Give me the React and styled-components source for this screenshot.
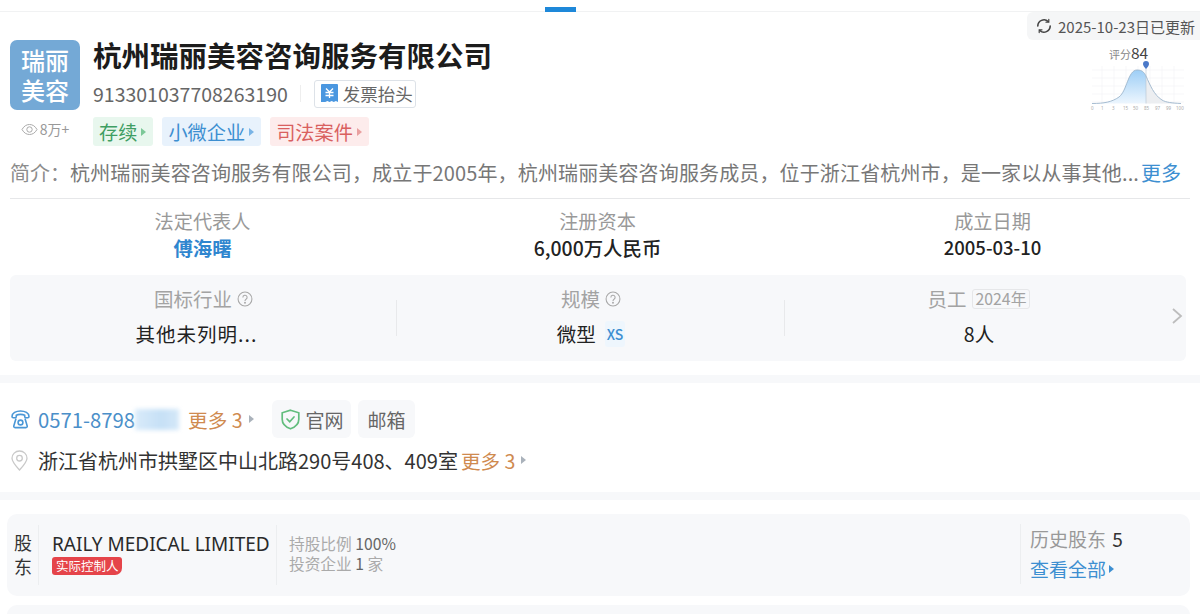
import React from "react";
import styled, { createGlobalStyle } from "styled-components";

const FONT = `"Noto Sans CJK SC", "Noto Sans", sans-serif`;

const INTRO_TEXT =
  "杭州瑞丽美容咨询服务有限公司\uFF0C成立于2005年\uFF0C杭州瑞丽美容咨询服务成员\uFF0C位于浙江省杭州市\uFF0C是一家以从事其他...";

const GlobalStyle = createGlobalStyle`
  html, body {
    margin: 0;
    padding: 0;
    background: #fff;
    font-family: ${FONT};
    color: #222;
  }
  * { box-sizing: border-box; }
`;

const Page = styled.div`
  position: relative;
  width: 1200px;
  height: 614px;
  overflow: hidden;
  background: #fff;
`;

const TabBar = styled.div`
  height: 12px;
  border-bottom: 1px solid #f1f2f3;
  display: flex;
  justify-content: center;
  align-items: flex-end;
`;
const TabMark = styled.div`
  width: 31px;
  height: 5px;
  margin-bottom: -1px;
  margin-right: 79px;
  background: #1e88d9;
`;

const UpdateBadge = styled.div`
  position: absolute;
  top: 12px;
  right: 0;
  width: 173px;
  height: 28px;
  padding-left: 9px;
  display: flex;
  align-items: center;
  gap: 6px;
  background: #f5f6f7;
  border-radius: 6px 0 0 6px;
  font-size: 15px;
  color: #555;
  white-space: nowrap;
`;

const ScoreBox = styled.div`
  position: absolute;
  top: 44px;
  right: 12px;
  width: 98px;
  height: 68px;
`;
const ScoreLabel = styled.div`
  position: absolute;
  top: 0;
  left: 19px;
  display: flex;
  align-items: baseline;
  font-size: 11px;
  color: #888;
  line-height: 16px;
  white-space: nowrap;
  b {
    font-weight: 400;
    font-size: 15.5px;
    color: #444;
  }
`;

const Header = styled.section`
  display: flex;
  gap: 13px;
  padding: 28px 0 0 10px;
`;
const LogoColumn = styled.div`
  width: 70px;
  display: flex;
  flex-direction: column;
  align-items: center;
`;
const Logo = styled.div`
  width: 70px;
  height: 70px;
  background: #74a9d6;
  border-radius: 7px;
  color: #fff;
  display: flex;
  align-items: center;
  justify-content: center;
  text-align: center;
  font-size: 24px;
  font-weight: 500;
  line-height: 30px;
`;
const Views = styled.div`
  margin-top: 10px;
  display: flex;
  align-items: center;
  gap: 2px;
  font-size: 14px;
  line-height: 18px;
  color: #999;
`;
const HeadInfo = styled.div`
  display: flex;
  flex-direction: column;
`;
const Title = styled.h1`
  margin: -1px 0 0;
  font-size: 28.5px;
  line-height: 32px;
  font-weight: 700;
  color: #1c1c1c;
  white-space: nowrap;
`;
const CodeRow = styled.div`
  display: flex;
  align-items: center;
  margin-top: 8px;
  height: 29px;
`;
const Code = styled.span`
  font-size: 19.5px;
  color: #666;
`;
const VBar = styled.span`
  width: 1px;
  height: 17px;
  margin: 0 13px 0 12px;
  background: #eee;
`;
const InvoiceBtn = styled.span`
  height: 28px;
  width: 102px;
  display: flex;
  align-items: center;
  gap: 5px;
  padding-left: 6px;
  border: 1px solid #dde2e8;
  border-radius: 3px;
  font-size: 17.5px;
  color: #666;
  white-space: nowrap;
`;
const TagRow = styled.div`
  display: flex;
  gap: 9px;
  margin-top: 9px;
`;
const Tag = styled.span`
  height: 29px;
  padding: 0 7px 0 6px;
  display: flex;
  align-items: center;
  gap: 4px;
  border-radius: 3px;
  font-size: 19.2px;
  background: ${(p) => p.$bg};
  color: ${(p) => p.$fg};
  white-space: nowrap;
`;
const Caret = styled.span`
  width: 0;
  height: 0;
  border-style: solid;
  border-width: 4px 0 4px 5px;
  border-color: transparent transparent transparent ${(p) => p.$c};
`;

const Intro = styled.div`
  margin: 13px 10px 0 10px;
  height: 40px;
  display: flex;
  align-items: center;
  font-size: 20px;
  color: #777;
  white-space: nowrap;
  border-bottom: 1px solid #e6e7e9;
  padding-bottom: 13px;
`;
const IntroLabel = styled.span`
  width: 60px;
  color: #8c8c8c;
`;
const IntroText = styled.span`
  letter-spacing: 0.14px;
`;
const IntroMore = styled.a`
  margin-left: 2px;
  color: #3d8fd1;
`;

const BasicRow = styled.div`
  display: grid;
  grid-template-columns: 395px 395px 395px;
  margin: 9px 0 0 5px;
  text-align: center;
`;
const Cell = styled.div`
  display: flex;
  flex-direction: column;
  align-items: center;
`;
const CellLabel = styled.div`
  font-size: 19.2px;
  line-height: 26px;
  color: #999;
`;
const CellValue = styled.div`
  font-size: ${(p) => p.$size || 19.4}px;
  line-height: 27px;
  color: ${(p) => (p.$link ? "#2f86cf" : "#222")};
  font-weight: ${(p) => (p.$link ? 700 : 500)};
`;

const StatsPanel = styled.div`
  margin: 14px 14px 0 10px;
  height: 86px;
  padding-top: 11px;
  border-radius: 6px;
  background: #f7f8fa;
  display: grid;
  grid-template-columns: 387px 388px 388px 13px;
`;
const Stat = styled.div`
  position: relative;
  display: flex;
  flex-direction: column;
  align-items: center;
  height: 60px;
  &::after {
    content: "";
    display: ${(p) => (p.$last ? "none" : "block")};
    position: absolute;
    right: 0;
    top: 14px;
    width: 1px;
    height: 36px;
    background: #e8e9eb;
  }
`;
const StatLabel = styled.div`
  display: flex;
  align-items: center;
  gap: 5px;
  font-size: 19.5px;
  line-height: 26px;
  color: #a3a3a3;
`;
const StatValue = styled.div`
  display: flex;
  align-items: center;
  margin-top: 9px;
  padding-right: ${(p) => p.$pr || 0}px;
  font-size: 19.5px;
  line-height: 26px;
  letter-spacing: ${(p) => p.$ls || 0}px;
  color: #222;
`;
const YearChip = styled.span`
  padding: 0 3px;
  border: 1px solid #e6e7e9;
  border-radius: 3px;
  font-size: 15.8px;
  line-height: 18px;
  color: #a3a3a3;
`;
const XsChip = styled.span`
  margin-left: 9px;
  padding: 0 2px;
  height: 26px;
  display: inline-flex;
  align-items: center;
  background: #eef6fd;
  border-radius: 3px;
  font-size: 14px;
  font-weight: 500;
  color: #3d8fd1;
`;
const PanelArrow = styled.div`
  display: flex;
  align-items: center;
  height: 60px;
  margin-left: -2px;
`;

const Band = styled.div`
  height: 8px;
  background: #f7f8fa;
  margin-top: ${(p) => p.$mt}px;
`;

const ContactRow = styled.div`
  display: flex;
  align-items: center;
  height: 38px;
  margin: 17px 0 0 11px;
`;
const PhoneText = styled.span`
  margin-left: 8px;
  font-size: 20.3px;
  color: #4b8fc9;
`;
const Blurred = styled.span`
  width: 44px;
  height: 21px;
  background: linear-gradient(90deg, #d9ebfa, #c6e0f6 60%, #d5e8f8);
  filter: blur(2px);
`;
const More = styled.span`
  display: flex;
  align-items: center;
  gap: 6px;
  margin-left: ${(p) => p.$ml}px;
  font-size: 19.6px;
  color: #cf8a4f;
  white-space: nowrap;
`;
const Chip = styled.span`
  height: 38px;
  display: flex;
  align-items: center;
  gap: 6px;
  padding: 0 ${(p) => p.$pr}px 0 ${(p) => p.$pl}px;
  margin-left: ${(p) => p.$ml}px;
  background: #f7f8fa;
  border-radius: 6px;
  font-size: 19px;
  color: #666;
`;
const AddressRow = styled.div`
  display: flex;
  align-items: center;
  height: 30px;
  margin: 7px 0 0 11px;
`;
const AddressText = styled.span`
  margin-left: 10px;
  font-size: 20px;
  color: #333;
  white-space: nowrap;
`;

const HolderCard = styled.div`
  display: flex;
  align-items: center;
  height: 82px;
  margin: 14px 10px 0 7px;
  background: #f7f8fa;
  border-radius: 10px;
`;
const HolderTag = styled.div`
  width: 32px;
  height: 60px;
  padding: 0 0 3px 7px;
  display: flex;
  align-items: center;
  border-right: 1px solid #eceef0;
  font-size: 18px;
  line-height: 24px;
  color: #333;
`;
const HolderName = styled.div`
  width: 238px;
  height: 60px;
  padding: 6px 0 0 13px;
  border-right: 1px solid #eceef0;
  white-space: nowrap;
`;
const NameText = styled.div`
  font-family: "Noto Sans", sans-serif;
  font-size: 19px;
  line-height: 26px;
  color: #2a2a2a;
`;
const ControlTag = styled.span`
  display: block;
  width: 70px;
  height: 18px;
  padding: 0 4px;
  border-radius: 3px 3px 7px 3px;
  background: #e5444a;
  color: #fff;
  font-size: 12.5px;
  line-height: 18px;
  white-space: nowrap;
`;
const HolderStats = styled.div`
  flex: 1;
  padding: 0 0 3px 12px;
  font-size: 15.7px;
  line-height: 20px;
  color: #aaa;
  b {
    font-weight: 400;
    color: #666;
  }
`;
const HistoryBox = styled.div`
  width: 170px;
  height: 60px;
  padding: 0 0 0 9px;
  border-left: 1px solid #eceef0;
  font-size: 19px;
  line-height: 30px;
  margin-top: -3px;
  color: #999;
  b {
    margin-left: 2px;
    font-weight: 400;
    color: #333;
  }
`;
const HistoryLink = styled.div`
  display: flex;
  align-items: center;
  gap: 3px;
  color: #3d8fd1;
`;
const NextCard = styled.div`
  height: 30px;
  margin: 9px 10px 0 7px;
  background: #f7f8fa;
  border-radius: 10px 10px 0 0;
`;

const RefreshIcon = () => (
  <svg width="16" height="16" viewBox="0 0 16 16" fill="none" stroke="#444" strokeWidth="1.6" strokeLinecap="round">
    <path d="M1.800 8a6.200 6.200 0 0 1 10.400-4.500" />
    <path d="M14.200 8a6.200 6.200 0 0 1-10.400 4.500" />
    <path d="M12.800 1.400v2.800H10" strokeWidth="1.200" />
    <path d="M3.200 14.600v-2.800H6" strokeWidth="1.200" />
  </svg>
);

const EyeIcon = () => (
  <svg width="17" height="13" viewBox="0 0 17 13" fill="none" stroke="#aaa" strokeWidth="1">
    <path d="M1 6.500C3 3 5.500 1.500 8.500 1.500S14 3 16 6.500C14 10 11.500 11.500 8.500 11.500S3 10 1 6.500Z" />
    <circle cx="8.500" cy="6.500" r="2.700" />
  </svg>
);

const InvoiceIcon = () => (
  <svg width="17" height="19" viewBox="0 0 17 19">
    <path d="M1 0h15a1 1 0 0 1 1 1v17l-2.100-1-2.100 1-2.100-1-2.200 1-2.100-1-2.100 1L0 18V1a1 1 0 0 1 1-1Z" fill="#4a97e0" />
    <path d="M5 4.500 8.500 8 12 4.500M4.500 8.500h8M4.500 11.500h8M8.500 8v6" stroke="#fff" strokeWidth="1.300" fill="none" />
  </svg>
);

const HelpIcon = () => (
  <svg width="16" height="16" viewBox="0 0 15 15" fill="none" stroke="#a8a8a8" strokeWidth="1">
    <circle cx="7.500" cy="7.500" r="6.500" />
    <path d="M5.500 6a2 2 0 1 1 3 1.700c-.7.400-1 .8-1 1.600" />
    <circle cx="7.500" cy="11" r=".4" />
  </svg>
);

const ChevronIcon = () => (
  <svg width="12" height="18" viewBox="0 0 12 18" fill="none" stroke="#bdbdbd" strokeWidth="1.800">
    <path d="M2 2l8 7-8 7" />
  </svg>
);

const PhoneIcon = () => (
  <svg width="19" height="19" viewBox="0 0 19 19" fill="none" stroke="#4a97d6" strokeWidth="1.600">
    <path d="M1 6.500C1 3 5 1 9.500 1S18 3 18 6.500c0 .8-.5 1.200-1.200 1.200h-2c-.7 0-1.100-.5-1.100-1.200V5.200C12.500 4.600 11 4.400 9.500 4.400s-3 .2-4.200.8v1.300c0 .7-.4 1.200-1.100 1.200h-2C1.500 7.700 1 7.300 1 6.500Z" />
    <path d="M5 8.500 2.800 16c-.2.900.3 1.600 1.200 1.600h11c.9 0 1.400-.7 1.200-1.600L14 8.500" />
    <circle cx="9.500" cy="12.500" r="2.400" />
  </svg>
);

const ShieldIcon = () => (
  <svg width="19" height="21" viewBox="0 0 19 21" fill="none" stroke="#62bd7d" strokeWidth="1.700">
    <path d="M9.500 1.200 17.800 3.800v6.500c0 4.500-3.500 7.800-8.300 9.500-4.800-1.700-8.300-5-8.300-9.500V3.800L9.500 1.200Z" />
    <path d="M6 10l2.700 2.700L13 8" strokeLinecap="round" />
  </svg>
);

const PinIcon = () => (
  <svg width="17" height="21" viewBox="0 0 17 21" fill="none" stroke="#c9c9c9" strokeWidth="1.300">
    <path d="M8.500 20C4 15 1 11.800 1 8.200 1 4.200 4.300 1 8.500 1S16 4.200 16 8.200c0 3.600-3 6.800-7.500 11.800Z" />
    <circle cx="8.500" cy="8.200" r="2.800" />
  </svg>
);

const AXIS = [
  [1, "0"],
  [11, "1"],
  [22, "3"],
  [33, "15"],
  [43, "50"],
  [54, "85"],
  [65, "97"],
  [76, "99"],
  [86, "100"],
];

// bell curve with the score marker
const ScoreChart = () => (
  <svg width="98" height="52" viewBox="0 0 98 52" style={{ position: "absolute", top: 16, left: 0 }}>
    <defs>
      <linearGradient id="bell" x1="0" y1="0" x2="0" y2="1">
        <stop offset="0" stopColor="#9dcef6" />
        <stop offset="1" stopColor="#edf6fe" />
      </linearGradient>
    </defs>
    <g stroke="#f3f4f7" strokeWidth="0.700">
      <path d="M2 10h92M2 18h92M2 26h92M2 34h92M2 42h92" />
      <path d="M12 6v38M24 6v38M36 6v38M48 6v38M60 6v38M72 6v38M84 6v38" />
    </g>
    <path d="M56 16C60 25 64 35 72 40 76 42.500 82 43 91 43.500H56Z" fill="#eceef1" />
    <path d="M2 43.500C14 43.500 22 42 29 37 37 31 38 10 47 10 52 10 54 12 56 16V43.500Z" fill="url(#bell)" />
    <path d="M2 43.500C14 43.500 22 42 29 37 37 31 38 10 47 10 52 10 54 12 56 16 60 25 64 35 72 40 76 42.500 82 43 91 43.500" fill="none" stroke="#9db5cc" strokeWidth="0.900" />
    <path d="M56 8V43.500" stroke="#b5c3d2" strokeWidth="0.600" />
    <path d="M56 9c-2-2.500-3-3.500-3-5a3 3 0 0 1 6 0c0 1.500-1 2.500-3 5Z" fill="#4b79c9" />
    {AXIS.map(([x, label]) => (
      <text key={label} x={x} y="50" fontSize="4.500" fill="#aaa" fontFamily="Noto Sans">
        {label}
      </text>
    ))}
  </svg>
);

const App = () => (
  <Page>
    <GlobalStyle />
    <TabBar>
      <TabMark />
    </TabBar>
    <UpdateBadge>
      <RefreshIcon />
      2025-10-23日已更新
    </UpdateBadge>
    <ScoreBox>
      <ScoreLabel>
        评分<b>84</b>
      </ScoreLabel>
      <ScoreChart />
    </ScoreBox>

    <Header>
      <LogoColumn>
        <Logo>
          瑞丽
          <br />
          美容
        </Logo>
        <Views>
          <EyeIcon />
          8万+
        </Views>
      </LogoColumn>
      <HeadInfo>
        <Title>杭州瑞丽美容咨询服务有限公司</Title>
        <CodeRow>
          <Code>913301037708263190</Code>
          <VBar />
          <InvoiceBtn>
            <InvoiceIcon />
            发票抬头
          </InvoiceBtn>
        </CodeRow>
        <TagRow>
          <Tag $bg="#e8f7ee" $fg="#3f9e63">
            存续
            <Caret $c="#7cc898" />
          </Tag>
          <Tag $bg="#e8f2fc" $fg="#3d8fd1">
            小微企业
            <Caret $c="#79b4e6" />
          </Tag>
          <Tag $bg="#fdecec" $fg="#d9605f">
            司法案件
            <Caret $c="#e9a0a0" />
          </Tag>
        </TagRow>
      </HeadInfo>
    </Header>

    <Intro>
      <IntroLabel>{"简介\uFF1A"}</IntroLabel>
      <IntroText>{INTRO_TEXT}</IntroText>
      <IntroMore>更多</IntroMore>
    </Intro>

    <BasicRow>
      <Cell>
        <CellLabel>法定代表人</CellLabel>
        <CellValue $link>傅海曙</CellValue>
      </Cell>
      <Cell>
        <CellLabel>注册资本</CellLabel>
        <CellValue>6,000万人民币</CellValue>
      </Cell>
      <Cell>
        <CellLabel>成立日期</CellLabel>
        <CellValue $size={18.5}>2005-03-10</CellValue>
      </Cell>
    </BasicRow>

    <StatsPanel>
      <Stat>
        <StatLabel>
          国标行业
          <HelpIcon />
        </StatLabel>
        <StatValue $pr={14} $ls={1}>
          其他未列明...
        </StatValue>
      </Stat>
      <Stat>
        <StatLabel>
          规模
          <HelpIcon />
        </StatLabel>
        <StatValue>
          微型
          <XsChip>XS</XsChip>
        </StatValue>
      </Stat>
      <Stat $last>
        <StatLabel>
          员工
          <YearChip>2024年</YearChip>
        </StatLabel>
        <StatValue>8人</StatValue>
      </Stat>
      <PanelArrow>
        <ChevronIcon />
      </PanelArrow>
    </StatsPanel>

    <Band $mt={14} />

    <ContactRow>
      <PhoneIcon />
      <PhoneText>0571-8798</PhoneText>
      <Blurred />
      <More $ml={9}>
        更多 3
        <Caret $c="#aab2bb" />
      </More>
      <Chip $pl={9} $pr={7} $ml={18}>
        <ShieldIcon />
        官网
      </Chip>
      <Chip $pl={10} $pr={9} $ml={7}>
        邮箱
      </Chip>
    </ContactRow>
    <AddressRow>
      <PinIcon />
      <AddressText>浙江省杭州市拱墅区中山北路290号408、409室</AddressText>
      <More $ml={3}>
        更多 3
        <Caret $c="#aab2bb" />
      </More>
    </AddressRow>

    <Band $mt={17} />

    <HolderCard>
      <HolderTag>
        股
        <br />
        东
      </HolderTag>
      <HolderName>
        <NameText>RAILY MEDICAL LIMITED</NameText>
        <ControlTag>实际控制人</ControlTag>
      </HolderName>
      <HolderStats>
        持股比例 <b>100%</b>
        <br />
        投资企业 <b>1</b> 家
      </HolderStats>
      <HistoryBox>
        历史股东 <b>5</b>
        <HistoryLink>
          查看全部
          <Caret $c="#3d8fd1" />
        </HistoryLink>
      </HistoryBox>
    </HolderCard>
    <NextCard />
  </Page>
);

export default App;
